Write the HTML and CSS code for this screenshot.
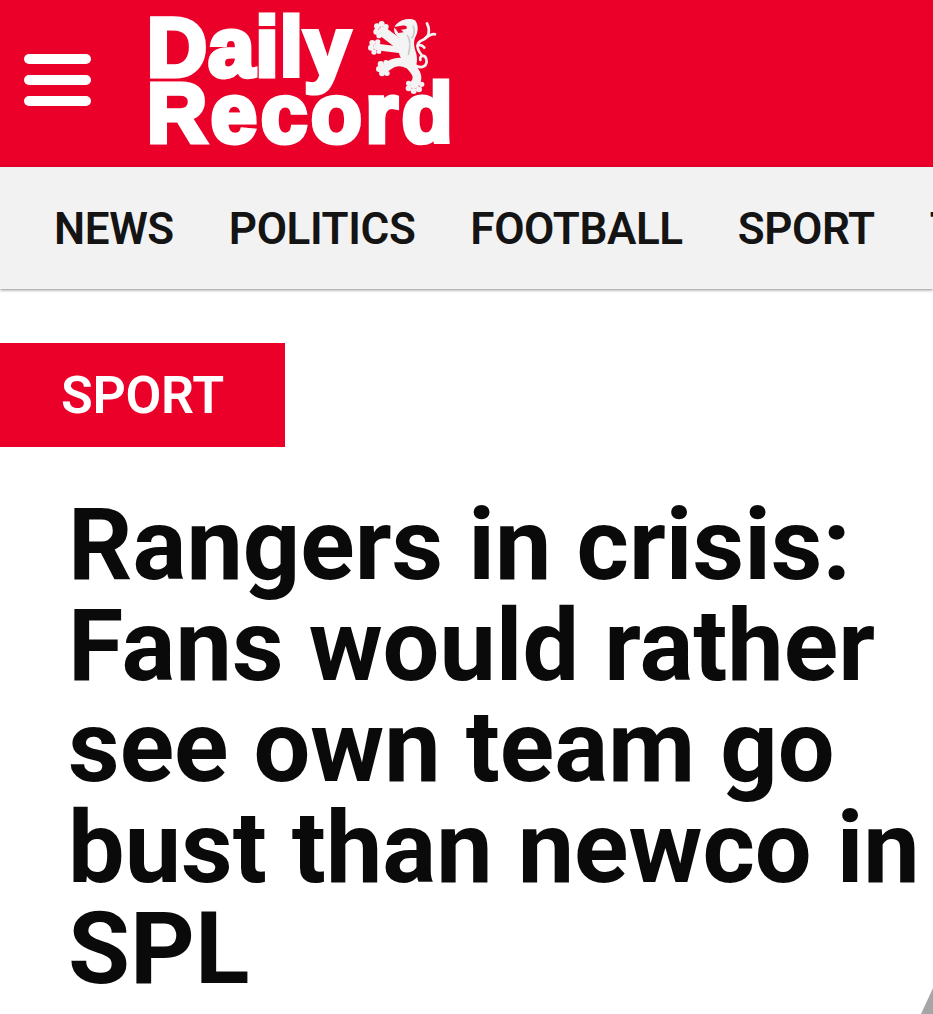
FILE: index.html
```html
<!DOCTYPE html>
<html lang="en">
<head>
<meta charset="utf-8">
<title>Daily Record</title>
<link rel="stylesheet" href="styles.css">
</head>
<body>
<header class="masthead">
  <button class="burger" aria-label="Menu"><span></span><span></span><span></span></button>
  <a class="logo">
    <span class="logo-line logo-daily">Daily</span>
    <span class="logo-line logo-record">Record</span>
    <svg class="lion" viewBox="0 0 300 300" aria-hidden="true">
      <g class="limb">
        <path stroke-width="30" d="M155 125 L96 80"/>
        <path stroke-width="20" d="M150 135 L78 126"/>
        <path stroke-width="26" d="M172 178 C145 165 125 170 102 190"/>
        <path stroke-width="26" d="M180 185 C198 205 205 220 190 238"/>
      </g>
      <g class="tail" stroke-width="8">
        <path d="M190 180 C215 195 232 180 225 160 C220 148 205 152 208 165"/>
        <path d="M212 150 C195 130 195 112 215 105 C235 98 238 75 228 55"/>
        <path d="M222 100 C235 90 245 85 252 88"/>
        <path d="M200 122 C208 118 214 120 220 128"/>
      </g>
      <g class="toes">
        <circle cx="78" cy="64" r="9"/><circle cx="92" cy="57" r="9"/><circle cx="105" cy="65" r="8"/><circle cx="76" cy="80" r="9"/><circle cx="84" cy="92" r="8"/>
        <circle cx="64" cy="114" r="9"/><circle cx="60" cy="128" r="9"/><circle cx="69" cy="141" r="8"/><circle cx="80" cy="111" r="8"/><circle cx="84" cy="140" r="7"/>
        <circle cx="89" cy="177" r="9"/><circle cx="84" cy="192" r="9"/><circle cx="93" cy="205" r="9"/><circle cx="108" cy="205" r="8"/><circle cx="105" cy="173" r="8"/>
        <circle cx="173" cy="235" r="8"/><circle cx="173" cy="250" r="9"/><circle cx="188" cy="258" r="9"/><circle cx="204" cy="253" r="9"/><circle cx="212" cy="238" r="8"/>
      </g>
      <path class="lion-body" d="M136 58 C150 42 178 38 192 46 C203 58 202 82 193 96 C186 112 190 128 196 146 C201 168 196 190 184 202 C170 195 158 180 150 160 C140 140 138 118 146 100 C138 94 132 88 130 80 C128 70 130 64 136 58 Z"/>
      <path class="lion-shade" d="M168 90 C178 100 178 125 172 150 M186 62 C192 74 190 90 182 100"/>
      <path class="lion-mouth" d="M128 66 L152 62 C166 60 170 66 166 72 L150 74 L158 82 L142 84 L136 74 Z"/>
    </svg>
  </a>
</header>
<nav class="sections">
  <a>NEWS</a>
  <a>POLITICS</a>
  <a>FOOTBALL</a>
  <a>SPORT</a>
  <a>TV&amp;FILM</a>
</nav>
<main class="article">
  <div class="tag">SPORT</div>
  <h1 class="headline">Rangers in crisis: Fans would rather see own team go bust than newco in SPL</h1>
</main>
<div class="corner"></div>
</body>
</html>
```
FILE: styles.css
```css
* { box-sizing: border-box; }
html, body { margin: 0; height: 1014px; overflow: hidden; }
body { background: #fff; font-family: Roboto, "Liberation Sans", sans-serif; position: relative; width: 933px; }

.masthead { height: 167px; background: #ea0029; display: flex; align-items: flex-start; padding-left: 24px; }
.burger { width: 67px; height: 52px; margin-top: 54px; padding: 0; border: 0; background: none; display: flex; flex-direction: column; justify-content: space-between; }
.burger span { display: block; height: 10px; border-radius: 5px; background: #fff; }

.logo { position: relative; margin-left: 56px; margin-top: 15px; color: #fff; font-family: "Liberation Sans", Arial, sans-serif; font-weight: 700; display: block; }
.logo-line { display: block; font-size: 83px; line-height: 66px; -webkit-text-stroke: 5px #fff; }
.logo-daily { letter-spacing: 1.2px; }
.logo-record { letter-spacing: 3.9px; }
.lion { position: absolute; left: 204px; top: -10px; width: 100px; height: 100px; }
.limb path, .tail path { fill: none; stroke-linecap: round; stroke: #f4f4f4; }
.toes circle { fill: #f4f4f4; }
.lion-body { fill: #f4f4f4; }
.lion-shade { fill: none; stroke: #c9c9c9; stroke-width: 5; }
.lion-mouth { fill: #ea0029; }

.sections { height: 122px; padding-top: 2px; background: #f2f2f2; box-shadow: 0 1px 3px rgba(0,0,0,.45); display: flex; align-items: center; gap: 55px; padding-left: 54px; overflow: hidden; position: relative; white-space: nowrap; }
.sections a { font-size: 44px; font-weight: 600; color: #141414; letter-spacing: -0.4px; }

.article { display: block; }
.tag { margin-top: 54px; width: 285px; height: 104px; background: #ea0029; color: #fff; font-size: 52px; font-weight: 600; padding-left: 61px; line-height: 106px; letter-spacing: -0.3px; }
.headline { margin: 48px 0 0; padding: 0 0 0 68px; font-size: 100.7px; line-height: 101px; font-weight: 700; color: #0a0a0a; }

.corner { position: absolute; right: 0; bottom: 0; width: 0; height: 0; border-left: 12px solid transparent; border-bottom: 26px solid #a6a6a6; }
```
